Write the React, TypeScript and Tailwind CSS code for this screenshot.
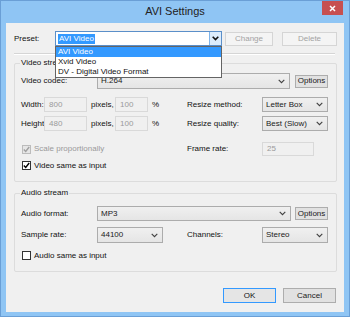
import React from 'react';

function Chevron({ bold = false }: { bold?: boolean }) {
  return (
    <svg width="7" height="5" viewBox="0 0 7 5" className="shrink-0">
      <path d="M0.7 0.8 L3.5 3.6 L6.3 0.8" fill="none" stroke="currentColor" strokeWidth={bold ? 1.6 : 1.1} />
    </svg>
  );
}

function Combo({ value, className }: { value: string; className: string }) {
  return (
    <div className={`flex items-center border border-[#acacac] bg-gradient-to-b from-[#f0f0f0] to-[#e5e5e5] text-[#1a1a1a] ${className}`}>
      <span className="ml-[3px]">{value}</span>
      <span className="ml-auto mr-[4px] text-[#404040]">
        <Chevron />
      </span>
    </div>
  );
}

function Btn({ children, className, disabled = false }: { children: React.ReactNode; className: string; disabled?: boolean }) {
  return (
    <div
      className={`flex items-center justify-center border ${
        disabled ? 'border-[#d5d5d5] bg-[#f4f4f4] text-[#a3a3a3]' : 'border-[#adadad] bg-[#e1e1e1] text-[#1a1a1a]'
      } ${className}`}
    >
      {children}
    </div>
  );
}

function Field({ value, className }: { value: string; className: string }) {
  return (
    <div className={`flex items-center border border-[#d9d9d9] bg-[#f0f0f0] text-[#9a9a9a] ${className}`}>
      <span className="ml-[4px]">{value}</span>
    </div>
  );
}

function Check({ checked, disabled = false, label }: { checked: boolean; disabled?: boolean; label: string }) {
  return (
    <div className="flex items-center">
      <div
        className={`w-[9px] h-[9px] border flex items-center justify-center ${
          disabled ? 'border-[#bcbcbc] bg-[#e6e6e6] text-[#a0a0a0]' : 'border-[#333333] bg-white text-black'
        }`}
      >
        {checked && (
          <svg width="7" height="7" viewBox="0 0 7 7">
            <path d="M0.8 3.6 L2.7 5.5 L6.2 1" fill="none" stroke="currentColor" strokeWidth="1.4" />
          </svg>
        )}
      </div>
      <span className={`ml-[3px] ${disabled ? 'text-[#9a9a9a]' : ''}`}>{label}</span>
    </div>
  );
}

export default function App() {
  return (
    <div className="relative w-[350px] h-[317px] bg-[#8fc5f4] shadow-[inset_0_0_0_1px_#6a9fd6] font-['Liberation_Sans',Arial,sans-serif] text-[8px] leading-none text-[#111] overflow-hidden">
      {/* title bar */}
      <div className="relative h-[23px] flex justify-center">
        <span className="mt-[6px] text-[11px] text-[#222]">AVI Settings</span>
        <div className="absolute right-[7px] top-[1px] w-[21px] h-[14px] bg-[#c75050] flex items-center justify-center">
          <svg width="7" height="7" viewBox="0 0 7 7">
            <path d="M1 1 L6 6 M6 1 L1 6" stroke="white" strokeWidth="1.5" />
          </svg>
        </div>
      </div>

      {/* client area */}
      <div className="relative ml-[6px] w-[338px] h-[289px] bg-[#f0f0f0] flex flex-col">
        {/* preset row */}
        <div className="flex items-center pt-[8px] pl-[8px]">
          <span className="w-[41px]">Preset:</span>
          <div className="relative w-[167px] h-[15px] bg-white border border-[#5b8fc9] flex items-center">
            <span className="ml-[2px] px-[1px] py-[1px] bg-[#3399ff] text-white">AVI Video</span>
            <div className="ml-auto h-full w-[12px] bg-[#dcecfc] border-l border-[#7eb4ea] flex items-center justify-center text-[#111]">
              <Chevron bold />
            </div>
            {/* dropdown list */}
            <div className="absolute left-[-1px] top-[14px] w-[167px] bg-white border border-[#646464] z-10">
              <div className="h-[10px] flex items-center pl-[2px] bg-[#3399ff] text-white">AVI Video</div>
              <div className="h-[10px] flex items-center pl-[2px]">Xvid Video</div>
              <div className="h-[10px] flex items-center pl-[2px]">DV - Digital Video Format</div>
            </div>
          </div>
          <Btn disabled className="ml-[3px] w-[48px] h-[14px]">Change</Btn>
          <Btn disabled className="ml-[9px] w-[55px] h-[14px]">Delete</Btn>
        </div>

        {/* separator */}
        <div className="ml-[8px] mt-[7px] w-[321px] h-[1px] bg-[#d5d5d5]" />
        <div className="ml-[8px] w-[321px] h-[1px] bg-white" />

        {/* video stream */}
        <div className="relative ml-[8px] mt-[8px] w-[323px] h-[119px] border border-[#dcdcdc] rounded-[2px]">
          <span className="absolute left-[5px] top-[-5px] px-[1px] bg-[#f0f0f0]">Video stream</span>

          <div className="flex items-center mt-[9px] ml-[6px]">
            <span className="w-[76px]">Video codec:</span>
            <Combo value="H.264" className="w-[193px] h-[16px]" />
            <Btn className="ml-[5px] w-[33px] h-[13px]">Options</Btn>
          </div>

          <div className="flex items-center mt-[8px] ml-[6px]">
            <div className="flex items-center w-[166px]">
              <span className="w-[23px]">Width:</span>
              <Field value="800" className="w-[43px] h-[15px]" />
              <span className="ml-[4px] w-[24px]">pixels,</span>
              <Field value="100" className="w-[33px] h-[15px]" />
              <span className="ml-[4px]">%</span>
            </div>
            <span className="w-[75px]">Resize method:</span>
            <Combo value="Letter Box" className="w-[66px] h-[15px]" />
          </div>

          <div className="flex items-center mt-[4px] ml-[6px]">
            <div className="flex items-center w-[166px]">
              <span className="w-[23px]">Height:</span>
              <Field value="480" className="w-[43px] h-[15px]" />
              <span className="ml-[4px] w-[24px]">pixels,</span>
              <Field value="100" className="w-[33px] h-[15px]" />
              <span className="ml-[4px]">%</span>
            </div>
            <span className="w-[75px]">Resize quality:</span>
            <Combo value="Best (Slow)" className="w-[66px] h-[15px]" />
          </div>

          <div className="flex items-center mt-[11px] ml-[6px]">
            <div className="w-[166px] pl-[1px]">
              <Check checked disabled label="Scale proportionally" />
            </div>
            <span className="w-[75px]">Frame rate:</span>
            <Field value="25" className="w-[52px] h-[14px]" />
          </div>

          <div className="flex items-center mt-[5px] ml-[7px]">
            <Check checked label="Video same as input" />
          </div>
        </div>

        {/* audio stream */}
        <div className="relative ml-[8px] mt-[11px] w-[323px] h-[79px] border border-[#dcdcdc] rounded-[2px]">
          <span className="absolute left-[5px] top-[-5px] px-[1px] bg-[#f0f0f0]">Audio stream</span>

          <div className="flex items-center mt-[12px] ml-[6px]">
            <span className="w-[76px]">Audio format:</span>
            <Combo value="MP3" className="w-[194px] h-[15px]" />
            <Btn className="ml-[4px] w-[33px] h-[13px]">Options</Btn>
          </div>

          <div className="flex items-center mt-[6px] ml-[6px]">
            <div className="flex items-center w-[166px]">
              <span className="w-[76px]">Sample rate:</span>
              <Combo value="44100" className="w-[66px] h-[16px]" />
            </div>
            <span className="w-[75px]">Channels:</span>
            <Combo value="Stereo" className="w-[66px] h-[16px]" />
          </div>

          <div className="flex items-center mt-[8px] ml-[7px]">
            <Check checked={false} label="Audio same as input" />
          </div>
        </div>

        {/* dialog buttons */}
        <div className="flex justify-end mt-[16px] pr-[8px]">
          <div className="w-[53px] h-[15px] flex items-center justify-center border border-[#3399ff] bg-[#e5e5e5] text-[#111]">OK</div>
          <Btn className="ml-[7px] w-[53px] h-[15px]">Cancel</Btn>
        </div>
      </div>
    </div>
  );
}
